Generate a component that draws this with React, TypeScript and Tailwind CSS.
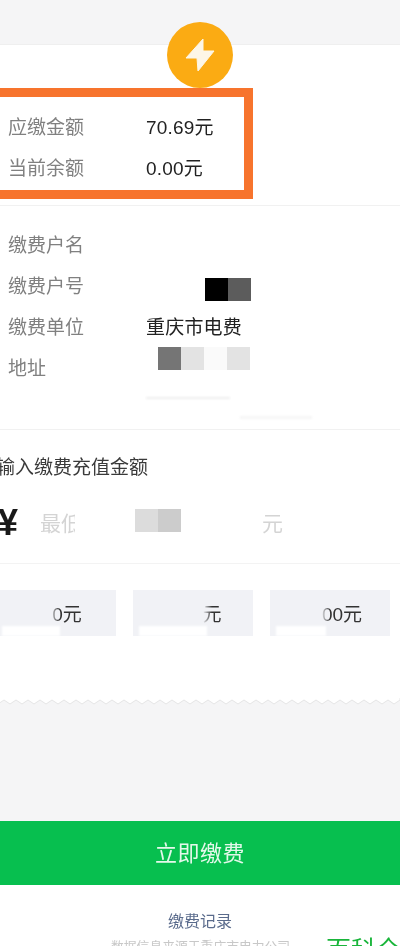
import React from 'react';

const font = { fontFamily: '"Liberation Sans", "Noto Sans CJK SC", sans-serif' };

const Row: React.FC<{ label: string; value?: string }> = ({ label, value }) => (
  <div className="flex items-center h-[41px] text-[19px]">
    <span className="w-[138px] text-[#808080] shrink-0">{label}</span>
    {value && <span className="text-[#222222] tracking-[0.2px]">{value}</span>}
  </div>
);

const App: React.FC = () => {
  return (
    <div className="relative w-[400px] h-[946px] overflow-hidden bg-[#f5f5f6] blur-[0.4px]" style={font}>
      <div className="h-[45px] border-b border-[#efefef]" />

      <div className="relative bg-white h-[653px]">
        {/* badge */}
        <div className="absolute left-[167px] -top-[23px] w-[66px] h-[66px] rounded-full bg-[#fbab13] flex items-center justify-center z-10">
          <svg width="32" height="36" viewBox="0 0 32 36" fill="#fdf6e6">
            <path d="M19 2 L2 21 L13 21 L14 34 L30 14 L19 14 Z" strokeLinejoin="round" stroke="#fdf6e6" strokeWidth="1" />
          </svg>
        </div>

        {/* highlight box */}
        <div className="absolute -left-[10px] top-[43px] w-[263px] h-[111px] border-[9px] border-[#f7742d]" />

        <div className="h-[161px] pl-2 pt-[63px] border-b border-[#f1f1f1]">
          <Row label="应缴金额" value="70.69元" />
          <Row label="当前余额" value="0.00元" />
        </div>

        <div className="relative h-[224px] pl-2 pt-[20px] border-b border-[#f1f1f1]">
          <Row label="缴费户名" />
          <div className="flex items-center h-[41px] text-[19px]">
            <span className="w-[197px] text-[#808080] shrink-0">缴费户号</span>
            <div className="w-[23px] h-[23px] bg-black mt-[3px]" />
            <div className="w-[23px] h-[23px] bg-[#5c5c5c] mt-[3px]" />
          </div>
          <Row label="缴费单位" value="重庆市电费" />
          <div className="flex items-center h-[41px] text-[19px]">
            <span className="w-[150px] text-[#808080] shrink-0">地址</span>
            <div className="flex -mt-[22px]">
              <div className="w-[23px] h-[23px] bg-[#757575]" />
              <div className="w-[23px] h-[23px] bg-[#e3e3e3]" />
              <div className="w-[23px] h-[23px] bg-[#fafafa]" />
              <div className="w-[23px] h-[23px] bg-[#e3e3e3]" />
            </div>
          </div>
          <div className="ml-[138px] mt-[7px] w-[84px] h-[2px] bg-[#eeeeee] blur-[1px]" />
          <div className="ml-[232px] mt-[17px] w-[72px] h-[3px] bg-[#f6f6f6] blur-[1px]" />
        </div>

        <div className="pt-[26px]">
          <div className="-ml-[4px] text-[19px] text-[#3a3a3a] leading-[24px]">输入缴费充值金额</div>
          <div className="relative h-[84px] border-b border-[#f3f3f3] flex items-center">
            <span className="-ml-[2px] mt-[2px] text-[36px] font-bold text-[#1a1a1a] leading-none">¥</span>
            <span className="ml-[22px] mt-[4px] text-[21px] text-[#d4d4d4] w-[35px] overflow-hidden whitespace-nowrap">最低</span>
            <div className="flex ml-[60px] -mt-[3px]">
              <div className="w-[23px] h-[23px] bg-[#dcdcdc]" />
              <div className="w-[23px] h-[23px] bg-[#cccccc]" />
            </div>
            <span className="ml-[81px] mt-[4px] text-[21px] text-[#d4d4d4]">元</span>
          </div>
          <div className="flex gap-[17px] -ml-[4px] mt-[26px]">
            {[
              { text: '0元', shift: 'ml-[22px]', cover: 'w-[58px]', fade: 'left-[54px]' },
              { text: '元', shift: 'ml-[38px]', cover: 'w-[68px]', fade: 'left-[70px]' },
              { text: '00元', shift: 'ml-[24px]', cover: 'w-[50px]', fade: 'left-[51px]' },
            ].map((b, i) => (
              <div
                key={i}
                className="relative w-[120px] h-[46px] bg-[#f1f2f6] flex items-center justify-center text-[19px] text-[#333333]"
              >
                <span className={`mt-[5px] ${b.shift}`}>{b.text}</span>
                <div className={`absolute top-[12px] w-[9px] h-[26px] bg-gradient-to-r from-[#f1f2f6] to-transparent ${b.fade}`} />
                <div className={`absolute left-[6px] top-[36px] h-[10px] bg-white blur-[1px] ${b.cover}`} />
              </div>
            ))}
          </div>
        </div>
      </div>

      {/* torn edge */}
      <svg className="block -mt-[1px]" width="400" height="8" viewBox="0 0 400 8">
        <path
          d={
            'M0 0 L400 0 L400 3 ' +
            Array.from({ length: 34 })
              .map((_, i) => `L${394 - i * 12} 7 L${388 - i * 12} 3`)
              .join(' ') +
            ' Z'
          }
          fill="#ffffff"
          stroke="#e6e6e6"
          strokeWidth="1"
        />
      </svg>

      <div className="h-[116px]" />

      <div className="h-[64px] bg-[#07bf4f] flex items-center justify-center text-[22px] text-[#e3f8ea] tracking-[0.5px]">
        <span className="mt-[1px]">立即缴费</span>
      </div>

      <div className="relative h-[61px] bg-white flex flex-col items-center pt-[26px]">
        <div className="text-[16px] leading-[22px] text-[#5a6b8c]">缴费记录</div>
        <div className="absolute left-[111px] top-[54px] text-[12.8px] leading-[16px] text-[#c8c8c8]">数据信息来源于重庆市电力公司</div>
        <div className="absolute left-[326px] top-[49px] text-[25px] leading-[32px] text-[#19b53a] whitespace-nowrap">百科全书</div>
      </div>
    </div>
  );
};

export default App;
